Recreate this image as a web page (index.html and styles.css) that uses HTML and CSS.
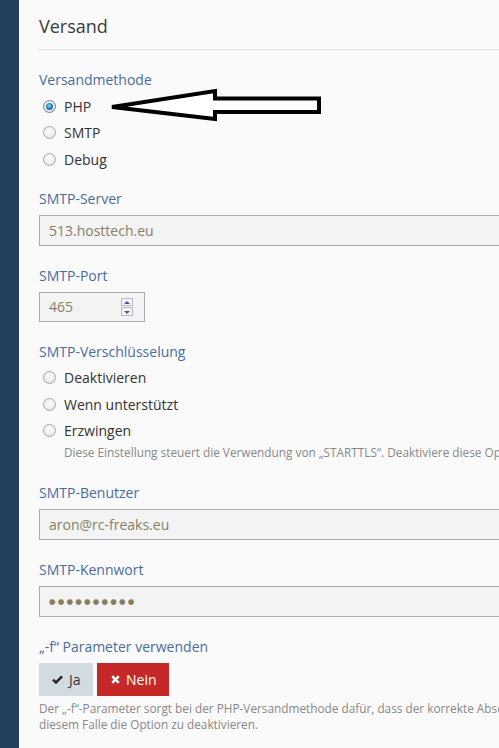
FILE: index.html
```html
<!DOCTYPE html>
<html lang="de">
<head>
<meta charset="utf-8">
<title>Versand</title>
<link rel="stylesheet" href="styles.css">
</head>
<body>
<div class="layout">
  <aside class="sidebar"></aside>
  <main class="content">
    <h2 class="title">Versand</h2>

    <div class="field radios">
      <div class="label">Versandmethode</div>
      <div class="radio-row"><span class="radio checked"></span><span>PHP</span></div>
      <div class="radio-row"><span class="radio"></span><span>SMTP</span></div>
      <div class="radio-row"><span class="radio"></span><span>Debug</span></div>
    </div>

    <div class="field">
      <div class="label">SMTP-Server</div>
      <div class="input wide">513.hosttech.eu</div>
    </div>

    <div class="field">
      <div class="label">SMTP-Port</div>
      <div class="input number">
        <span>465</span>
        <span class="spinner"><span class="spin up"></span><span class="spin down"></span></span>
      </div>
    </div>

    <div class="field radios with-help">
      <div class="label">SMTP-Verschlüsselung</div>
      <div class="radio-row"><span class="radio"></span><span>Deaktivieren</span></div>
      <div class="radio-row"><span class="radio"></span><span>Wenn unterstützt</span></div>
      <div class="radio-row"><span class="radio"></span><span>Erzwingen</span></div>
      <p class="help indent">Diese Einstellung steuert die Verwendung von „STARTTLS“. Deaktiviere diese Option nur bei Problemen.</p>
    </div>

    <div class="field after-help">
      <div class="label">SMTP-Benutzer</div>
      <div class="input wide">aron@rc-freaks.eu</div>
    </div>

    <div class="field">
      <div class="label">SMTP-Kennwort</div>
      <div class="input wide"><span class="dots">●●●●●●●●●●</span></div>
    </div>

    <div class="field">
      <div class="label">„-f“ Parameter verwenden</div>
      <div class="buttons">
        <span class="btn btn-yes">
          <svg class="ico" width="11" height="9" viewBox="0 0 11 9"><path d="M1 4.6 L4 7.5 L10 1.4" fill="none" stroke="#222" stroke-width="2.4"/></svg>
          Ja
        </span>
        <span class="btn btn-no">
          <svg class="ico" width="9" height="9" viewBox="0 0 9 9"><path d="M1.2 1.2 L7.8 7.8 M7.8 1.2 L1.2 7.8" fill="none" stroke="#fff" stroke-width="2.6"/></svg>
          Nein
        </span>
      </div>
      <p class="help">Der „-f“-Parameter sorgt bei der PHP-Versandmethode dafür, dass der korrekte Absender verwendet wird. Bei Problemen empfiehlt es sich in<br>diesem Falle die Option zu deaktivieren.</p>
    </div>
  </main>
  <svg class="arrow" width="330" height="130" viewBox="0 0 330 130">
    <polygon points="112,107 215,91 215,98.5 319,98.5 319,112 215,112 215,119" fill="#fff" stroke="#000" stroke-width="4" stroke-linejoin="miter"/>
  </svg>
</div>
</body>
</html>
```

FILE: styles.css
```css
html, body {
  margin: 0;
  padding: 0;
  background: #fafafa;
  overflow: hidden;
}

body {
  font-family: "Open Sans", "DejaVu Sans", sans-serif;
  color: #333;
  width: 499px;
  height: 748px;
}

.layout {
  position: relative;
  display: flex;
  height: 748px;
}

.sidebar {
  flex: 0 0 19px;
  background: #243f5d;
}

.content {
  flex: 1 1 auto;
  padding: 14px 0 0 20px;
  overflow: hidden;
  min-width: 0;
}

.title {
  margin: 0;
  font-size: 18px;
  font-weight: 400;
  line-height: 24px;
  color: #3a3a3a;
  padding-bottom: 11px;
  border-bottom: 1px solid #dedede;
  width: 700px;
}

.field {
  margin-top: 20px;
}

.label {
  font-size: 14px;
  line-height: 20px;
  color: #4a6c9f;
  margin-bottom: 6px;
}

.radios .label {
  margin-bottom: 3px;
}

.radios + .field {
  margin-top: 16px;
}

.radios + .field.after-help {
  margin-top: 23px;
}

.radio-row {
  display: flex;
  align-items: center;
  height: 26.5px;
  font-size: 14px;
  padding-left: 4px;
  color: #333;
}

.radio {
  box-sizing: border-box;
  width: 13px;
  height: 13px;
  border-radius: 50%;
  border: 1px solid #a9a9a9;
  background: radial-gradient(circle at 50% 40%, #fdfdfd 0%, #ececec 60%, #d6d6d6 100%);
  margin-right: 8px;
  flex: 0 0 13px;
  position: relative;
}

.radio.checked {
  border-color: #6f7f8f;
}

.radio.checked::after {
  content: "";
  position: absolute;
  left: 2px;
  top: 2px;
  width: 7px;
  height: 7px;
  border-radius: 50%;
  background: radial-gradient(circle at 45% 40%, #8fd0ff 0%, #2c86c9 45%, #123f66 100%);
}

.input {
  box-sizing: border-box;
  height: 31px;
  border: 1px solid #ababab;
  background: #f3f3f3;
  color: #858068;
  font-size: 14px;
  display: flex;
  align-items: center;
  padding-left: 9px;
}

.input.wide {
  width: 700px;
}

.input.number {
  width: 106px;
  justify-content: space-between;
  padding-right: 11px;
  height: 30px;
}

.spinner {
  display: flex;
  flex-direction: column;
  width: 12px;
  height: 18px;
  gap: 1px;
}

.spin {
  flex: 1;
  box-sizing: border-box;
  border: 1px solid #b9b9c6;
  background: #f4f4f8;
  position: relative;
}

.spin::after {
  content: "";
  position: absolute;
  left: 2px;
  width: 0;
  height: 0;
  border-left: 3px solid transparent;
  border-right: 3px solid transparent;
}

.spin.up::after {
  top: 2px;
  border-bottom: 3px solid #55558a;
}

.spin.down::after {
  top: 3px;
  border-top: 3px solid #55558a;
}

.dots {
  font-family: "DejaVu Sans", sans-serif;
  font-size: 7.5px;
  letter-spacing: 2.2px;
  color: #847e5e;
}

.help {
  margin: 0;
  font-size: 11.8px;
  line-height: 16px;
  color: #888;
  white-space: nowrap;
}

.help.indent {
  padding-left: 25px;
  margin-top: 0;
}

.buttons {
  display: flex;
  gap: 4px;
  height: 33px;
}

.btn {
  display: flex;
  align-items: center;
  gap: 6px;
  font-size: 14px;
  height: 33px;
  box-sizing: border-box;
}

.btn-yes {
  width: 54px;
  padding-left: 13px;
  background: #d2dbe1;
  color: #333;
}

.btn-no {
  width: 72px;
  padding-left: 14px;
  background: #c62828;
  color: #fff;
}

.buttons + .help {
  margin-top: 4px;
}

.arrow {
  position: absolute;
  left: 0;
  top: 0;
  pointer-events: none;
}
```
